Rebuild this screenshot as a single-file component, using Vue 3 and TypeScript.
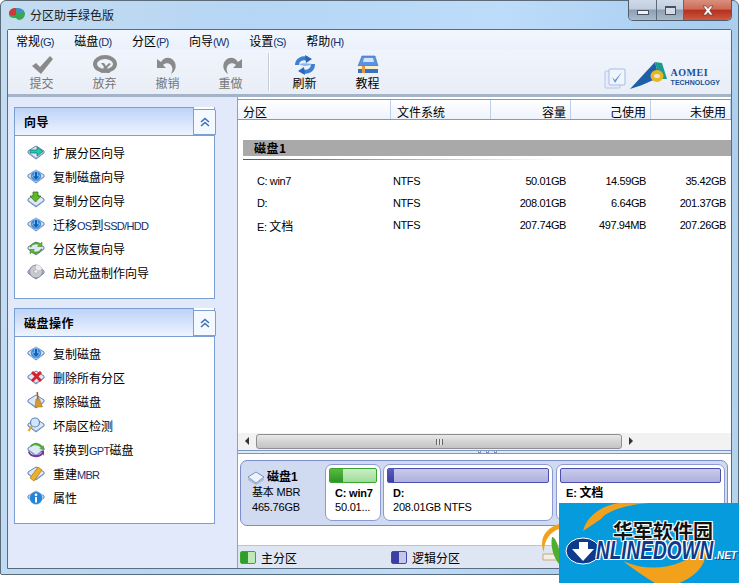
<script setup lang="ts">
const menus = ['常规(G)', '磁盘(D)', '分区(P)', '向导(W)', '设置(S)', '帮助(H)']

const panels = [
  {
    title: '向导',
    cls: 'wiz',
    items: [
      { label: '扩展分区向导', icon: 'extend' },
      { label: '复制磁盘向导', icon: 'down' },
      { label: '复制分区向导', icon: 'copy' },
      { label: '迁移OS到SSD/HDD', icon: 'down' },
      { label: '分区恢复向导', icon: 'restore' },
      { label: '启动光盘制作向导', icon: 'cd' },
    ],
  },
  {
    title: '磁盘操作',
    cls: 'ops',
    items: [
      { label: '复制磁盘', icon: 'down' },
      { label: '删除所有分区', icon: 'del' },
      { label: '擦除磁盘', icon: 'broom' },
      { label: '坏扇区检测', icon: 'search' },
      { label: '转换到GPT磁盘', icon: 'convert' },
      { label: '重建MBR', icon: 'mbr' },
      { label: '属性', icon: 'info' },
    ],
  },
]

const rows = [
  { name: 'C: win7', fs: 'NTFS', cap: '50.01GB', used: '14.59GB', free: '35.42GB' },
  { name: 'D:', fs: 'NTFS', cap: '208.01GB', used: '6.64GB', free: '201.37GB' },
  { name: 'E: 文档', fs: 'NTFS', cap: '207.74GB', used: '497.94MB', free: '207.26GB' },
]

// latin runs are set narrower than the CJK around them, like the old UI font
const parts = (label: string) =>
  label
    .split(/([\x00-\x7f]+)/)
    .filter(Boolean)
    .map((text) => ({ text, latin: /^[\x00-\x7f]/.test(text) }))
</script>

<template>
  <div class="window">
    <div class="titlebar">
      <svg class="appicon" width="18" height="16" viewBox="0 0 18 16">
        <path d="M1 8C1 4 4 2 8 2c5 0 9 2 9 6 0 3-3 6-6 6-1 0-2-1-3-2-3 0-7 0-7-4z" fill="#3aa655" />
        <path d="M1 8C1 4 4 2 8 2L8 9C5 10 2 10 1 8z" fill="#d0393a" />
        <path d="M8 2c4 0 7 1 8 4L9 7z" fill="#3f8fd6" />
      </svg>
      <span class="title">分区助手绿色版</span>
      <div class="capbtns">
        <div class="capbtn min"><i></i></div>
        <div class="capbtn max"><i></i></div>
        <div class="capbtn close">
          <svg width="14" height="11" viewBox="0 0 14 11"><path d="M2 1h3l2 2.500L9 1h3L8.700 5.500 12 10H9L7 7.500 5 10H2l3.300-4.500z" fill="#fff" stroke="#5a2a22" stroke-width=".6" /></svg>
        </div>
      </div>
    </div>

    <div class="client">
      <div class="menubar">
        <span v-for="m in menus" :key="m" class="menu">
          <span v-for="p in parts(m)" :key="p.text" :class="p.latin ? 'lat' : 'cjk'">{{ p.text }}</span>
        </span>
      </div>

      <div class="toolbar">
        <div class="tool off">
          <svg width="26" height="20" viewBox="0 0 26 20"><path d="M3 11l4-3 4 4L21 1l3 3-12 15z" fill="#8a8a8a" /></svg>
          <span>提交</span>
        </div>
        <div class="tool off">
          <svg width="26" height="20" viewBox="0 0 26 20">
            <ellipse cx="13" cy="9" rx="10" ry="7" fill="none" stroke="#8a8a8a" stroke-width="4" />
            <path d="M9 18l3-6-3-4h3l2 3 3-3 2 1-4 4 3 5h-3l-2-3-2 3z" fill="#8a8a8a" />
          </svg>
          <span>放弃</span>
        </div>
        <div class="tool off">
          <svg width="26" height="20" viewBox="0 0 26 20"><path d="M2 4v9h9L8 10c3-3 8-2 9 2 1 2 0 5-1 7 5-3 6-9 3-13C15 1 9 2 6 7z" fill="#8a8a8a" /></svg>
          <span>撤销</span>
        </div>
        <div class="tool off">
          <svg width="26" height="20" viewBox="0 0 26 20"><path d="M24 4v9h-9l3-3c-3-3-8-2-9 2-1 2 0 5 1 7-5-3-6-9-3-13C11 1 17 2 20 7z" fill="#8a8a8a" /></svg>
          <span>重做</span>
        </div>
        <div class="sep"></div>
        <div class="tool">
          <svg width="26" height="20" viewBox="0 0 26 20">
            <path d="M5 10C5 5 10 2 16 4" fill="none" stroke="#3f7fd2" stroke-width="4" />
            <path d="M21 9c0 6-5 9-11 7" fill="none" stroke="#3f7fd2" stroke-width="4" />
            <path d="M7 9c3-1 9-1 13 0-2 2-9 3-13 0z" fill="#8db6e8" />
            <path d="M13 0l7 4-6 4z" fill="#2a66ba" />
            <path d="M13 20l-7-4 6-4z" fill="#2a66ba" />
          </svg>
          <span>刷新</span>
        </div>
        <div class="tool">
          <svg width="26" height="20" viewBox="0 0 26 20">
            <path d="M7 1h13l3 10H3z" fill="#5b93e0" stroke="#3a6fbd" stroke-width=".6" />
            <path d="M9 3h9l1 4H8z" fill="#d3e4fa" />
            <path d="M3 11h20v3H3z" fill="#f6f0d0" />
            <path d="M3 14h20v4H3z" fill="#3d70bd" />
            <path d="M7 11h3v7H7z" fill="#e9973a" />
          </svg>
          <span>教程</span>
        </div>
        <div class="brand">
          <svg class="check" width="22" height="22" viewBox="0 0 22 22">
            <rect x="1" y="3" width="15" height="17" rx="1" fill="#e6edfa" stroke="#b5c6e6" />
            <rect x="5" y="1" width="16" height="16" rx="1" fill="#f0f4fc" stroke="#a5bbe4" />
            <path d="M8 9l3 3 7-8-7 11z" fill="#6d92d8" />
          </svg>
          <svg class="logo" width="40" height="30" viewBox="0 0 40 30">
            <path d="M1 29L26 2l4 16-8 3C16 24 8 27 1 29z" fill="#1e5fa8" />
            <path d="M26 2l7 1 5 16-8 0z" fill="#1f9a8c" />
            <ellipse cx="28" cy="16" rx="6.500" ry="6" fill="#eab51f" />
            <ellipse cx="28" cy="16" rx="3" ry="2" fill="#e8e6d8" />
          </svg>
          <div class="brandtext">
            <b>AOMEI</b>
            <em>TECHNOLOGY</em>
          </div>
        </div>
      </div>

      <div class="main">
        <aside class="sidebar">
          <section v-for="panel in panels" :key="panel.title" class="panel" :class="panel.cls">
            <header class="panelhead">
              <strong>{{ panel.title }}</strong>
              <div class="fold">
                <svg width="10" height="10" viewBox="0 0 10 10"><path d="M1 5l4-3.500L9 5M1 9l4-3.500L9 9" fill="none" stroke="#3c6fb0" stroke-width="1.500" /></svg>
              </div>
            </header>
            <ul class="items">
              <li v-for="it in panel.items" :key="it.label">
                <svg class="itemicon" width="18" height="18" viewBox="0 0 18 18">
                  <path d="M1 8l8-5 8 5v2l-8 6-8-6z" fill="#dfe8f7" stroke="#6480b4" />
                  <path d="M1 9.500l8 5.500 8-5.500" fill="none" stroke="#8ea5cc" />
                  <template v-if="it.icon === 'extend'"><path d="M3 7h7V4l6 4.500L10 13v-3H3z" fill="#22cfa0" stroke="#13677c" stroke-width=".7" /></template>
                  <template v-else-if="it.icon === 'down'"><circle cx="9" cy="9" r="5.500" fill="#3f8ddc" stroke="#d8ecff" stroke-width=".5" /><path d="M7.500 4.500h3V9h2.500L9 13.500 5 9h2.500z" fill="#1260b4" stroke="#cfe6ff" stroke-width=".5" /></template>
                  <template v-else-if="it.icon === 'copy'"><path d="M6 1h5v4h3l-5.500 6L3 5h3z" fill="#5fb82c" stroke="#2f6f12" stroke-width=".7" /></template>
                  <template v-else-if="it.icon === 'restore'"><path d="M4 8c1-3 6-4 8-2l-1.500 1.500H15V3l-1.500 1.500C10 2 4 4 3 8zM14 10c-1 3-6 4-8 2l1.500-1.500H3V15l1.500-1.500C8 16 14 14 15 10z" fill="#5fb52c" stroke="#3b7c18" stroke-width=".5" /></template>
                  <template v-else-if="it.icon === 'cd'"><circle cx="9" cy="8.500" r="6.500" fill="#c6c9cf" stroke="#8b8f96" /><path d="M9 2a6.500 6.500 0 0 1 6 4L9 8.500z" fill="#eceef1" /><circle cx="9" cy="8.500" r="1.800" fill="#f3f3f3" stroke="#999" stroke-width=".5" /></template>
                  <template v-else-if="it.icon === 'del'"><path d="M6 3l3.500 3L13 3l2 2-3.500 3.500L15 12l-2 2-3.500-3.500L6 14l-2-2 3.500-3.500L4 5z" fill="#d9202a" /></template>
                  <template v-else-if="it.icon === 'broom'"><path d="M9.500 0h1.500l.8 7h-1.800z" fill="#a8651f" /><path d="M9 7h3.500l3 8H8z" fill="#d69a35" stroke="#9a6a1f" stroke-width=".5" /></template>
                  <template v-else-if="it.icon === 'search'"><circle cx="8" cy="6.500" r="4.500" fill="#cfe6fa" stroke="#5d87b8" stroke-width="1.200" /><path d="M5 10l-3.500 5" stroke="#e0a02c" stroke-width="2" /></template>
                  <template v-else-if="it.icon === 'convert'"><path d="M2 11c2 5 10 6 13 1l-2-1h4v5l-1-2c-4 5-13 4-15-2z" fill="#7d2f9e" /><path d="M4 7c3-3 8-2 10 1l-2 1 5 1V5l-1 1.500C12 2 6 2 3 6z" fill="#4faa35" /></template>
                  <template v-else-if="it.icon === 'mbr'"><path d="M3 14L11 3l4 3-8 11z" fill="#eab12a" stroke="#a87611" stroke-width=".7" /></template>
                  <template v-else><circle cx="9" cy="10" r="6.500" fill="#2384d8" stroke="#d8ecff" stroke-width=".5" /><circle cx="9" cy="6.800" r="1.400" fill="#fff" /><path d="M8 9h2v5.500H8z" fill="#fff" /></template>
                </svg>
                <span>
                  <span v-for="p in parts(it.label)" :key="p.text" :class="p.latin ? 'lat' : 'cjk'">{{ p.text }}</span>
                </span>
              </li>
            </ul>
          </section>
        </aside>

        <div class="content">
          <div class="listarea">
            <div class="thead">
              <div class="th c1">分区</div>
              <div class="th c2">文件系统</div>
              <div class="th c3 r">容量</div>
              <div class="th c4 r">己使用</div>
              <div class="th c5 r">未使用</div>
            </div>
            <div class="group">
              <div class="grouphead">磁盘1</div>
              <div class="groupline"></div>
            </div>
            <div class="tbody">
              <div v-for="row in rows" :key="row.name" class="tr">
                <div class="td c1 pad">
                  <span v-for="p in parts(row.name)" :key="p.text" :class="p.latin ? 'lat' : 'cjk'">{{ p.text }}</span>
                </div>
                <div class="td c2 fs">{{ row.fs }}</div>
                <div class="td c3 r">{{ row.cap }}</div>
                <div class="td c4 r">{{ row.used }}</div>
                <div class="td c5 r">{{ row.free }}</div>
              </div>
            </div>
          </div>

          <div class="hscroll">
            <div class="arrow left"></div>
            <div class="thumb"><span></span></div>
            <div class="arrow right"></div>
          </div>
          <div class="splitter"><i></i><i></i><i></i></div>

          <div class="diskarea">
            <div class="diskcard">
              <div class="diskinfo">
                <div class="diskname">
                  <svg width="18" height="14" viewBox="0 0 18 14"><path d="M1 6l8-5 8 5-8 6z" fill="#eef3fb" stroke="#7b93bd" /><path d="M1 7v2l8 5 8-5V7l-8 5z" fill="#a9bad8" /></svg>
                  <b>磁盘1</b>
                </div>
                <div class="diskline">基本 MBR</div>
                <div class="diskline">465.76GB</div>
              </div>
              <div class="part p1">
                <div class="bar green"><i style="width: 29%"></i></div>
                <div class="pname">C: win7</div>
                <div class="psize">50.01...</div>
              </div>
              <div class="part p2">
                <div class="bar blue"><i style="width: 4%"></i></div>
                <div class="pname">D:</div>
                <div class="psize">208.01GB NTFS</div>
              </div>
              <div class="part p3">
                <div class="bar blue"></div>
                <div class="pname">E: <span class="pcjk">文档</span></div>
              </div>
            </div>
          </div>

          <div class="legend">
            <div class="leg l1"><span class="swatch g"></span>主分区</div>
            <div class="leg l2"><span class="swatch b"></span>逻辑分区</div>
          </div>
        </div>
      </div>
    </div>

    <!-- stamp pasted over the shot, the round logo peeks out on its left -->
    <svg class="wmpeek" width="18" height="44" viewBox="0 0 18 44">
      <path d="M2 36V30h16v6z" fill="#f4efe4" stroke="#c7a77c" />
      <path d="M11 13c3 0 5 6 7 12v15c-5-6-9-17-7-27z" fill="#4fae2e" />
      <path d="M18 0C8 3 1 10 1 20c0 3 1 6 2 8 0-12 6-20 15-23z" fill="#f2a11c" />
    </svg>
    <div class="watermark">
      <svg class="wmarc" width="180" height="80" viewBox="0 0 180 80">
        <path d="M24 28C28 12 44 2 60 0L90 0C66 2 48 8 42 16 36 20 30 24 24 28z" fill="#f2a11c" />
        <path d="M64 58C90 70 125 66 146 42 150 58 140 72 120 80L96 80C86 74 74 66 64 58z" fill="#f2a11c" />
      </svg>
      <div class="wmcn">华军软件园</div>
      <div class="wmen">
        <svg width="36" height="28" viewBox="0 0 36 28"><ellipse cx="18" cy="14" rx="17" ry="13" fill="#0d3a8c" stroke="#fff" /><path d="M14 5h9v7h6L18 24 7 12h7z" fill="#fff" /></svg>
        <span class="big">NLINEDOWN</span><span class="net">.NET</span>
      </div>
    </div>
  </div>
</template>

<style>
html,
body {
  margin: 0;
  background: #fff;
}
</style>

<style scoped>
.window {
  position: relative;
  width: 739px;
  height: 583px;
  box-sizing: border-box;
  overflow: hidden;
  font-family: "Noto Sans CJK SC", "Liberation Sans", sans-serif;
  font-size: 12px;
  color: #000;
}
.window::before {
  content: '';
  position: absolute;
  left: 0;
  top: 0;
  width: 739px;
  height: 575px;
  border: 1px solid #5c6b7a;
  border-radius: 6px 6px 2px 2px;
  box-sizing: border-box;
  background: linear-gradient(100deg, #c5dcf0 0%, #b5d6f5 30%, #bddcfa 60%, #a9cdef 85%, #b8d4ea 100%);
}
.lat {
  font-family: "Liberation Sans", sans-serif;
  font-size: 11px;
  letter-spacing: -.7px;
  color: #14306e;
}
.titlebar {
  position: relative;
  height: 29px;
  display: flex;
  align-items: center;
  padding-left: 8px;
  box-sizing: border-box;
}
.appicon {
  margin-right: 4px;
  margin-top: -1px;
}
.title {
  font-size: 12px;
  color: #1a1a1a;
}
.capbtns {
  margin-left: auto;
  margin-right: 7px;
  align-self: flex-start;
  display: flex;
  height: 20px;
  border: 1px solid #4f5c6c;
  border-top: none;
  border-radius: 0 0 5px 5px;
  overflow: hidden;
}
.capbtn {
  display: flex;
  align-items: center;
  justify-content: center;
  height: 100%;
  background: linear-gradient(#cfdae8 0%, #c0cddc 45%, #8e9fb3 50%, #a8bacb 100%);
  border-right: 1px solid #5d6a7a;
  box-sizing: border-box;
}
.capbtn.min {
  width: 28px;
}
.capbtn.max {
  width: 27px;
}
.capbtn.close {
  width: 47px;
  border-right: none;
  background: linear-gradient(#d8907c 0%, #cf6a55 45%, #b5301f 52%, #cf5a3f 100%);
}
.min i {
  display: block;
  width: 10px;
  height: 3px;
  margin-top: 5px;
  background: #eef2f6;
  border: 1px solid #48525e;
}
.max i {
  display: block;
  width: 9px;
  height: 6px;
  border: 1px solid #48525e;
  border-top-width: 2px;
  background: #d4dde7;
}
.client {
  position: relative;
  width: 725px;
  height: 540px;
  margin-left: 7px;
  display: flex;
  flex-direction: column;
  border: 1px solid #5b6b7e;
  border-radius: 2px 2px 0 0;
  box-sizing: border-box;
  background: #e1e9fb;
}
.menubar {
  height: 20px;
  display: flex;
  align-items: center;
  padding-left: 8px;
  background: linear-gradient(#f2f7fe, #eaf1fc);
  flex: none;
}
.menu {
  margin-right: 20.500px;
  font-size: 12px;
}
.toolbar {
  height: 47px;
  flex: none;
  display: flex;
  align-items: center;
  padding-left: 2px;
  background: linear-gradient(#f0f5fd, #e8edf6);
  border-bottom: 3px solid #a3b3c8;
  box-sizing: border-box;
}
.tool {
  width: 63px;
  display: flex;
  flex-direction: column;
  align-items: center;
  font-size: 12px;
  line-height: 16px;
  padding-top: 1px;
}
.tool svg {
  display: block;
}
.tool.off {
  color: #757575;
}
.sep {
  width: 1px;
  height: 38px;
  margin: 0 4px 0 6px;
  background: #c3ccd8;
  box-shadow: 1px 0 0 #fff;
}
.brand {
  margin-left: auto;
  margin-right: 11px;
  align-self: flex-end;
  margin-bottom: 4px;
  display: flex;
  align-items: flex-end;
}
.check {
  margin-right: 3px;
  margin-bottom: 0;
}
.brandtext {
  display: flex;
  flex-direction: column;
  margin-left: 2px;
  margin-bottom: 3px;
}
.brandtext b {
  font-family: "Liberation Serif", serif;
  font-size: 10px;
  line-height: 11px;
  color: #1a4f99;
  letter-spacing: .5px;
}
.brandtext em {
  font-family: "Liberation Sans", sans-serif;
  font-size: 7px;
  font-style: normal;
  font-weight: 700;
  line-height: 9px;
  color: #1a4f99;
}
.main {
  flex: 1;
  min-height: 0;
  display: flex;
}
.sidebar {
  width: 230px;
  flex: none;
  box-sizing: border-box;
  padding: 10px 0 0 6px;
  background: #e1e9fb;
  border-right: 1px solid #8ba2c6;
}
.panel {
  width: 201px;
  box-sizing: border-box;
  background: #fff;
  border: 1px solid #7c9fd3;
  border-top: none;
  border-top-color: transparent;
}
.wiz {
  height: 192px;
}
.ops {
  height: 216px;
  margin-top: 9px;
}
.panelhead {
  position: relative;
  height: 28px;
  margin: 0 -1px 0 -1px;
  box-sizing: border-box;
  width: 180px;
  padding-left: 9px;
  display: flex;
  align-items: center;
  background: linear-gradient(#bcd3f8, #eef4fe);
  border: 1px solid #7c9fd3;
  border-bottom: none;
}
.panelhead strong {
  font-size: 12px;
  font-weight: 700;
  letter-spacing: .5px;
}
.fold {
  position: absolute;
  left: 178px;
  top: 1px;
  width: 23px;
  height: 26px;
  box-sizing: border-box;
  display: flex;
  align-items: center;
  justify-content: center;
  background: #f4f8ff;
  border: 1px solid #7c9fd3;
  border-radius: 0 2px 0 0;
}
.panelhead::after {
  content: '';
  position: absolute;
  left: -1px;
  top: 27px;
  width: 201px;
  height: 1px;
  background: #7c9fd3;
}
.items {
  list-style: none;
  margin: 0;
  padding: 5px 0 0 12px;
}
.items li {
  height: 24px;
  display: flex;
  align-items: center;
  font-size: 12px;
}
.itemicon {
  margin-right: 8px;
  flex: none;
}
.content {
  flex: 1;
  min-width: 0;
  display: flex;
  flex-direction: column;
  background: #fff;
}
.listarea {
  flex: 1;
  min-height: 0;
  padding-top: 2px;
}
.thead {
  height: 21px;
  display: flex;
  align-items: flex-start;
  border-top: 1px solid #6f9fdc;
  border-bottom: 1px solid #6f9fdc;
  box-sizing: border-box;
  background: linear-gradient(#fff, #eef3fb);
}
.th {
  height: 100%;
  line-height: 24px;
  box-sizing: border-box;
  border-right: 1px solid #bcd0ea;
  font-size: 12px;
  padding: 0 4px 0 5px;
  white-space: nowrap;
}
.th.c2 {
  padding-left: 6px;
}
.c1 {
  width: 153px;
}
.c2 {
  width: 100px;
}
.c3 {
  width: 80px;
}
.c4 {
  width: 80px;
}
.c5 {
  width: 80px;
}
.r {
  text-align: right;
}
.group {
  padding: 20px 0 0 5px;
}
.grouphead {
  height: 16px;
  line-height: 16px;
  padding-left: 11px;
  background: #a9a9a9;
  font-size: 12px;
  font-weight: 700;
  letter-spacing: .5px;
}
.groupline {
  height: 1px;
  margin-top: 3px;
  width: 312px;
  background: linear-gradient(90deg, #2f6193, #fff);
}
.tbody {
  padding-top: 10px;
}
.tr {
  display: flex;
  height: 22px;
  align-items: center;
}
.td {
  box-sizing: border-box;
  padding-right: 5px;
  font-size: 11px;
  letter-spacing: -.4px;
  padding-left: 5px;
  font-family: "Liberation Sans", "Noto Sans CJK SC", sans-serif;
}
.td.pad {
  padding-left: 19px;
  white-space: pre;
}
.td.fs {
  padding-left: 2px;
}
.td .lat {
  font-size: 11px;
  letter-spacing: -.4px;
  color: #000;
}
.td .cjk {
  font-size: 12px;
  letter-spacing: 0;
}
.hscroll {
  flex: none;
  height: 17px;
  display: flex;
  align-items: center;
  background: #f2f2f2;
}
.arrow {
  width: 18px;
  height: 100%;
  position: relative;
  flex: none;
}
.arrow::before {
  content: '';
  position: absolute;
  top: 4px;
  border: 4px solid transparent;
}
.arrow.left::before {
  left: 3px;
  border-right-color: #333;
}
.arrow.right::before {
  right: 3px;
  border-left-color: #333;
}
.thumb {
  width: 366px;
  height: 15px;
  box-sizing: border-box;
  border: 1px solid #8f8f8f;
  border-radius: 3px;
  background: linear-gradient(#e9e9e9, #d2d2d2 55%, #c4c4c4);
  display: flex;
  align-items: center;
  justify-content: center;
}
.thumb span {
  width: 7px;
  height: 6px;
  background: repeating-linear-gradient(90deg, #666 0 1px, #e3e3e3 1px 3px);
}
.splitter {
  flex: none;
  height: 4px;
  box-sizing: border-box;
  display: flex;
  justify-content: center;
  gap: 5px;
  background: #dfe8f7;
  border-top: 1px solid #7c96c5;
  border-bottom: 1px solid #7c96c5;
  padding-left: 6px;
}
.splitter i {
  display: block;
  width: 3px;
  height: 3px;
  margin-top: -1px;
  box-sizing: border-box;
  border: 1px solid #7c96c5;
  background: #fff;
}
.diskarea {
  flex: none;
  height: 91px;
  box-sizing: border-box;
  padding: 6px 3px 0 2px;
  background: #fff;
}
.diskcard {
  height: 66px;
  display: flex;
  gap: 2px;
  border: 1px solid #7b8ecb;
  border-radius: 7px;
  background: #d0dbf2;
  box-sizing: border-box;
  overflow: hidden;
}
.diskinfo {
  width: 84px;
  flex: none;
  margin-right: -2px;
  padding: 9px 0 0 6px;
  box-sizing: border-box;
  font-family: "Liberation Sans", "Noto Sans CJK SC", sans-serif;
  line-height: 15px;
}
.diskname {
  display: flex;
  align-items: center;
  gap: 2px;
  font-size: 12px;
}
.diskline {
  padding-left: 5px;
  font-size: 11px;
  letter-spacing: -.2px;
}
.part {
  height: 57px;
  margin-top: 3px;
  box-sizing: border-box;
  border: 1px solid #8c9ad4;
  border-radius: 7px;
  background: #fff;
  padding: 3px;
  font-family: "Liberation Sans", "Noto Sans CJK SC", sans-serif;
  font-size: 11px;
  letter-spacing: -.2px;
  line-height: 15px;
  flex: none;
}
.p1 {
  width: 56px;
}
.p2 {
  width: 170px;
}
.p3 {
  width: 169px;
  margin-left: 1px;
}
.bar {
  height: 15px;
  border-radius: 2px;
  box-sizing: border-box;
  overflow: hidden;
}
.bar i {
  display: block;
  height: 100%;
}
.bar.green {
  background: linear-gradient(#cceec8, #9ddc97);
  border: 1px solid #38a52f;
}
.bar.green i {
  background: linear-gradient(#58bb40, #2e9428);
}
.bar.blue {
  background: linear-gradient(#c9cbea, #aeb0dd);
  border: 1px solid #4c4fb0;
}
.bar.blue i {
  background: linear-gradient(#5a5cc0, #3c3ea4);
}
.pname {
  margin: 3px 0 0 6px;
  font-weight: 700;
}
.pcjk {
  font-size: 12px;
}
.psize {
  margin-left: 6px;
  margin-top: -1px;
}
.legend {
  flex: none;
  height: 23px;
  display: flex;
  align-items: center;
  background: #dfe6f3;
  border-top: 1px solid #b8c5d8;
  box-sizing: border-box;
  font-size: 12px;
  padding-left: 2px;
}
.leg {
  display: flex;
  align-items: center;
}
.l1 {
  width: 151px;
}
.swatch {
  width: 16px;
  height: 13px;
  margin-right: 5px;
  border-radius: 2px;
  box-sizing: border-box;
}
.swatch.g {
  background: linear-gradient(90deg, #2f9e2a 0 50%, #bfeab8 50%);
  border: 1px solid #3aa832;
}
.swatch.b {
  background: linear-gradient(90deg, #3c3ea4 0 50%, #c4c6ea 50%);
  border: 1px solid #4446ac;
}
.wmpeek {
  position: absolute;
  left: 541px;
  top: 524px;
}
.watermark {
  position: absolute;
  left: 559px;
  top: 503px;
  width: 180px;
  height: 80px;
  background: #069bdc;
  overflow: hidden;
}
.wmarc {
  position: absolute;
  left: 0;
  top: 0;
}
.wmcn {
  position: absolute;
  left: 54px;
  top: 18px;
  font-size: 20px;
  line-height: 20px;
  font-weight: 700;
  color: #111;
  letter-spacing: 0;
  text-shadow: 1px 1px 0 #fff, -1px -1px 0 #fff, 1px -1px 0 #fff, -1px 1px 0 #fff;
}
.wmen {
  position: absolute;
  left: 6px;
  top: 34px;
  display: flex;
  align-items: center;
  font-family: "Liberation Sans", sans-serif;
  font-style: italic;
  font-weight: 700;
  color: #0d3a8c;
}
.big {
  display: inline-block;
  font-size: 19px;
  line-height: 18px;
  margin-left: -5px;
  transform: scale(1, 1.35);
  text-shadow: 1px 1px 0 #fff, -1px -1px 0 #fff, 1px -1px 0 #fff, -1px 1px 0 #fff;
}
.net {
  font-size: 10px;
  color: #fff;
  margin-left: 1px;
  margin-top: 8px;
  text-shadow: 1px 1px 0 #0d3a8c;
}
</style>
